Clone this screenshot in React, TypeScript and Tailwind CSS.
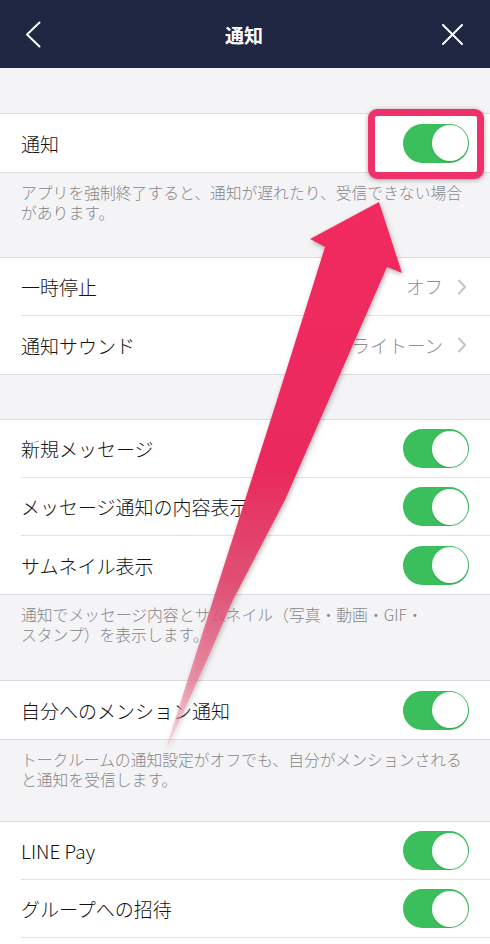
import React from "react";

const FONT = { fontFamily: '"Noto Sans CJK JP", "Noto Sans", sans-serif' };

function Toggle() {
  return (
    <div className="w-[66px] h-[39px] rounded-full bg-[#3bbf5c] p-[1.5px] flex justify-end shrink-0">
      <div className="w-[36px] h-[36px] rounded-full bg-white shadow-[0_1px_2px_rgba(0,0,0,0.15)]" />
    </div>
  );
}

function Chevron() {
  return (
    <svg width="10" height="16" viewBox="0 0 10 16" className="shrink-0">
      <path d="M2 1.5 L8 8 L2 14.5" fill="none" stroke="#c5c5ca" strokeWidth="2" strokeLinecap="round" strokeLinejoin="round" />
    </svg>
  );
}

type RowProps = { label: string; last?: boolean; value?: string; toggle?: boolean };

function Row({ label, last, value, toggle }: RowProps) {
  return (
    <div className="h-[58px] pl-[21px] bg-white">
      <div className={`h-full flex items-center justify-between pr-[21px] ${last ? "" : "border-b border-[#e3e3e6]"}`}>
        <span className="text-[19px] font-light text-[#111111] leading-none">{label}</span>
        {toggle && <Toggle />}
        {value !== undefined && (
          <div className="flex items-center gap-[14px] pr-[2px]">
            <span className="text-[18.5px] font-light text-[#8e8e93] leading-none">{value}</span>
            <Chevron />
          </div>
        )}
      </div>
    </div>
  );
}

function Section({ children }: { children: React.ReactNode }) {
  return <div className="border-y border-[#dcdce0] bg-white">{children}</div>;
}

function Desc({ lines, h }: { lines: string[]; h: string }) {
  return (
    <div className={`${h} pt-[10px] px-[21px] text-[15.8px] font-light leading-[20px] text-[#86868b]`}>
      {lines.map((l, i) => (
        <div key={i} className="whitespace-nowrap">{l}</div>
      ))}
    </div>
  );
}

export default function App() {
  return (
    <div className="relative w-[490px] h-[944px] overflow-hidden bg-[#f4f4f6]" style={FONT}>
      <header className="h-[68px] bg-[#1f2743] flex items-center">
        <div className="flex-1 pl-[25px] flex items-center">
          <svg width="16" height="27" viewBox="0 0 16 27">
            <path d="M14.5 1.5 L2 13.5 L14.5 25.5" fill="none" stroke="#ffffff" strokeWidth="2" strokeLinecap="round" strokeLinejoin="round" />
          </svg>
        </div>
        <div className="text-white text-[19px] font-bold leading-none">通知</div>
        <div className="flex-1 pr-[27px] flex justify-end items-center">
          <svg width="21" height="21" viewBox="0 0 21 21">
            <path d="M1 1 L20 20 M20 1 L1 20" fill="none" stroke="#ffffff" strokeWidth="2" strokeLinecap="round" />
          </svg>
        </div>
      </header>

      <div className="h-[45px]" />
      <Section>
        <Row label="通知" toggle last />
      </Section>
      <Desc h="h-[84px]" lines={["アプリを強制終了すると、通知が遅れたり、受信できない場合", "があります。"]} />

      <Section>
        <Row label="一時停止" value="オフ" />
        <Row label="通知サウンド" value="ライトーン" last />
      </Section>
      <div className="h-[44px]" />

      <Section>
        <Row label="新規メッセージ" toggle />
        <Row label="メッセージ通知の内容表示" toggle />
        <Row label="サムネイル表示" toggle last />
      </Section>
      <Desc h="h-[85px]" lines={["通知でメッセージ内容とサムネイル（写真・動画・GIF・", "スタンプ）を表示します。"]} />

      <Section>
        <Row label="自分へのメンション通知" toggle last />
      </Section>
      <Desc h="h-[81px]" lines={["トークルームの通知設定がオフでも、自分がメンションされる", "と通知を受信します。"]} />

      <Section>
        <Row label="LINE Pay" toggle />
        <Row label="グループへの招待" toggle />
        <Row label="" />
      </Section>

      {/* highlight box */}
      <div className="absolute left-[368px] top-[109px] w-[116px] h-[70px] rounded-[9px] border-[7px] border-[#f0306a] shadow-[0_1px_5px_rgba(0,0,0,0.35)] pointer-events-none" />

      {/* arrow annotation */}
      <svg className="absolute left-0 top-0 pointer-events-none" width="490" height="944" viewBox="0 0 490 944">
        <defs>
          <linearGradient id="ag" gradientUnits="userSpaceOnUse" x1="0" y1="200" x2="0" y2="750">
            <stop offset="0" stopColor="#f2295f" stopOpacity="1" />
            <stop offset="0.5" stopColor="#e92c5e" stopOpacity="1" />
            <stop offset="0.7" stopColor="#e0416a" stopOpacity="0.88" />
            <stop offset="0.88" stopColor="#e8738f" stopOpacity="0.7" />
            <stop offset="1" stopColor="#f2b3c3" stopOpacity="0.4" />
          </linearGradient>
          <filter id="sh" x="-20%" y="-20%" width="140%" height="140%">
            <feDropShadow dx="1" dy="2" stdDeviation="2.5" floodColor="#000000" floodOpacity="0.3" />
          </filter>
        </defs>
        <polygon
          filter="url(#sh)"
          fill="url(#ag)"
          points="379,202 402,273 387,267 285,500 233,600 207,660 170,742 166,748 194,660 213,600 245,500 277,400 325,247 310,239"
        />
      </svg>
    </div>
  );
}
